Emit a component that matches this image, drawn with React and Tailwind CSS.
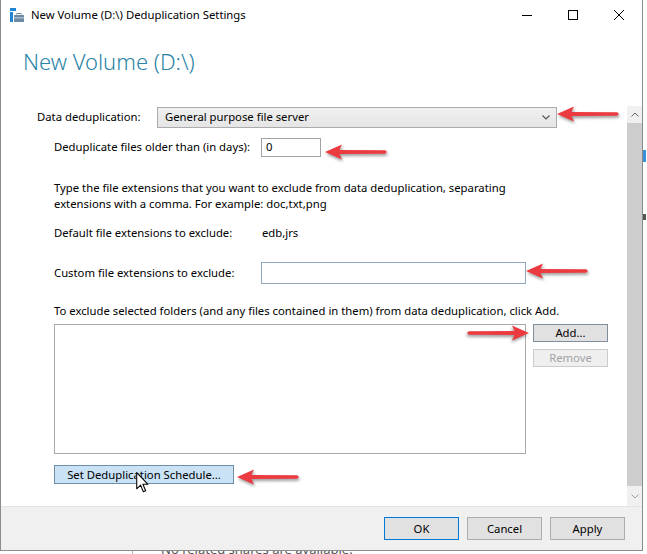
import React from 'react';

const font = "font-['Noto_Sans','Open_Sans','Liberation_Sans',sans-serif]";

const RedArrow = ({ className }) => (
  <svg
    viewBox="0 0 64 20"
    className={`pointer-events-none absolute h-[20px] w-[64px] drop-shadow-[1px_2px_1.5px_rgba(0,0,0,0.4)] ${className}`}
  >
    <path d="M0 10 L17 2.5 L14.5 8 L60 8.3 Q63.5 10 60 11.7 L14.5 12 L17 17.5 Z" fill="#ec3b40" />
  </svg>
);

const Cursor = () => (
  <svg viewBox="0 0 12 20" className="pointer-events-none absolute left-[136px] top-[472px] h-[21px] w-[13px]">
    <path d="M0.5 0.5 L0.5 16 L4.2 12.5 L6.8 18.8 L9 17.9 L6.4 11.7 L11.2 11.7 Z" fill="#fff" stroke="#000" strokeWidth="1" strokeLinejoin="round" />
  </svg>
);

// each caller passes its own border / background / text colours
const WinButton = ({ children, className = '' }) => (
  <button type="button" className={`flex items-center justify-center border text-[11.3px] leading-none ${className}`}>
    {children}
  </button>
);

const TitleBar = () => (
  <div className="flex h-[30px] items-center">
    <svg viewBox="0 0 14 14" className="ml-[9px] h-[14px] w-[14px]">
      <rect x="0" y="0" width="6" height="3" fill="#1f86d6" />
      <rect x="0" y="4" width="3" height="10" fill="#1f86d6" />
      <rect x="4" y="7" width="10" height="7" rx="0.5" fill="#6c8aa3" />
      <rect x="7" y="5.5" width="4" height="2" fill="none" stroke="#6c8aa3" strokeWidth="1" />
      <rect x="4" y="9.5" width="10" height="0.8" fill="#d6e2ec" />
    </svg>
    <span className="ml-[7px] text-[11.3px] text-black">New Volume (D:\) Deduplication Settings</span>
    <div className="ml-auto flex h-full">
      <div className="flex w-[46px] items-center justify-center">
        <svg viewBox="0 0 10 10" className="h-[10px] w-[10px]">
          <path d="M0 5.5 H10" stroke="#000" strokeWidth="1" />
        </svg>
      </div>
      <div className="flex w-[46px] items-center justify-center">
        <svg viewBox="0 0 10 10" className="h-[10px] w-[10px]">
          <rect x="0.5" y="0.5" width="9" height="9" fill="none" stroke="#000" strokeWidth="1" />
        </svg>
      </div>
      <div className="flex w-[46px] items-center justify-center">
        <svg viewBox="0 0 10 10" className="h-[10px] w-[10px]">
          <path d="M0 0 L10 10 M10 0 L0 10" stroke="#000" strokeWidth="1" />
        </svg>
      </div>
    </div>
  </div>
);

const ScrollBar = () => (
  <div className="flex w-[15px] flex-col bg-[#f0f0f0]">
    <div className="flex h-[17px] items-center justify-center">
      <svg viewBox="0 0 8 5" className="h-[5px] w-[8px]">
        <path d="M0.5 4.5 L4 1 L7.5 4.5" fill="none" stroke="#606060" strokeWidth="1" />
      </svg>
    </div>
    <div className="flex-1 bg-[#cdcdcd]" />
    <div className="flex h-[20px] items-center justify-center">
      <svg viewBox="0 0 8 5" className="h-[5px] w-[8px]">
        <path d="M0.5 0.5 L4 4 L7.5 0.5" fill="none" stroke="#a0a0a0" strokeWidth="1" />
      </svg>
    </div>
  </div>
);

const Settings = () => (
  <div className="flex-1 pl-[36px] text-[11.3px] text-black">
    {/* Dedup mode */}
    <div className="mt-[1px] flex items-center">
      <span className="w-[120px]">Data deduplication:</span>
      <div className="flex h-[21px] w-[400px] items-center border border-[#acacac] bg-gradient-to-b from-[#f0f0f0] to-[#e5e5e5] pl-[7px] pr-[6px]">
        <span>General purpose file server</span>
        <svg viewBox="0 0 8 5" className="ml-auto h-[5px] w-[8px]">
          <path d="M0.5 0.5 L4 4 L7.5 0.5" fill="none" stroke="#555" strokeWidth="1.2" />
        </svg>
      </div>
    </div>

    <div className="ml-[17px]">
      <div className="mt-[10px] flex items-center">
        <span className="w-[207px]">Deduplicate files older than (in days):</span>
        <div className="flex h-[19px] w-[60px] items-center border border-[#a3a3a3] bg-white pl-[4px]">0</div>
      </div>

      <p className="mt-[23px] w-[462px] leading-[16px]">
        Type the file extensions that you want to exclude from data deduplication, separating extensions with a comma. For example: doc,txt,png
      </p>

      <div className="mt-[13px] flex h-[16px] items-center">
        <span className="w-[208px]">Default file extensions to exclude:</span>
        <span>edb,jrs</span>
      </div>

      <div className="mt-[21px] flex items-center">
        <span className="w-[207px]">Custom file extensions to exclude:</span>
        <div className="h-[22px] w-[265px] border border-[#8fa8bd] bg-white" />
      </div>

      <p className="mt-[19px] h-[16px] leading-[16px]">
        To exclude selected folders (and any files contained in them) from data deduplication, click Add.
      </p>

      <div className="mt-[5px] flex">
        <div className="h-[130px] w-[472px] border border-[#ababab] bg-white" />
        <div className="ml-[7px] flex flex-col gap-[7px]">
          <WinButton className="h-[18px] w-[75px] border-[#7f8f9e] bg-[#e1e1e1] text-black">Add...</WinButton>
          <WinButton className="h-[18px] w-[75px] border-[#cccccc] bg-[#efefef] text-[#a3a3a3]">Remove</WinButton>
        </div>
      </div>

      <WinButton className="mt-[11px] h-[19px] w-[180px] border-[#6f8ea9] bg-[#c9e2f5] text-black">
        Set Deduplication Schedule...
      </WinButton>
    </div>
  </div>
);

export default function App() {
  return (
    <div className={`relative h-[554px] w-[647px] overflow-hidden bg-white ${font}`}>
      <div className="flex">
        <div className="flex h-[551px] w-[643px] flex-col border-b border-l border-r border-[#8c8c8c] bg-white">
          <TitleBar />

          <div className="h-[76px] pl-[22px] pt-[16px]">
            <h1 className="text-[22px] font-light leading-[30px] text-[#2a84a8]">New Volume (D:\)</h1>
          </div>

          <div className="flex flex-1">
            <Settings />
            <ScrollBar />
          </div>

          <div className="flex h-[44px] justify-end gap-[8px] border-t border-[#e3e3e3] bg-[#f0f0f0] pr-[17px] pt-[10px]">
            <WinButton className="h-[23px] w-[75px] border-[#0078d7] bg-[#e1e1e1] text-black">OK</WinButton>
            <WinButton className="h-[23px] w-[75px] border-[#adadad] bg-[#e1e1e1] text-black">Cancel</WinButton>
            <WinButton className="h-[23px] w-[75px] border-[#adadad] bg-[#e1e1e1] text-black">Apply</WinButton>
          </div>
        </div>

        {/* page behind the dialog */}
        <div className="flex w-[4px] flex-col bg-white">
          <div className="mt-[150px] h-[12px] w-[3px] bg-[#3b8fd6]" />
          <div className="mt-[52px] h-[6px] w-[3px] bg-[#555]" />
        </div>
      </div>

      <div className="flex h-[3px] overflow-hidden">
        <div className="ml-[132px] w-px bg-[#b5b5b5]" />
        <span className="-mt-[9px] ml-[28px] text-[13px] leading-[14px] text-[#555]">No related shares are available.</span>
      </div>

      <RedArrow className="left-[557px] top-[104px]" />
      <RedArrow className="left-[325px] top-[142px]" />
      <RedArrow className="left-[526px] top-[261px]" />
      <RedArrow className="left-[465px] top-[323px] scale-x-[-1]" />
      <RedArrow className="left-[237px] top-[467px]" />
      <Cursor />
    </div>
  );
}
